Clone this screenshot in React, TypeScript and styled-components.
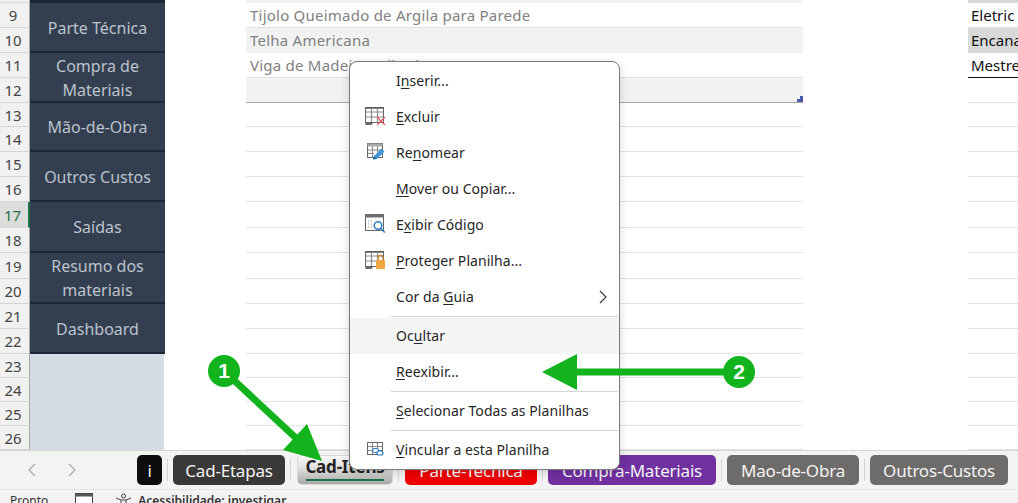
import React from "react";
import styled, { createGlobalStyle } from "styled-components";

const GlobalStyle = createGlobalStyle`
  html, body { margin: 0; padding: 0; background: #fff; }
  body { width: 1018px; height: 503px; overflow: hidden; font-family: "Noto Sans", "Open Sans", sans-serif; }
`;

const Page = styled.div`
  position: relative;
  width: 1018px;
  height: 503px;
  overflow: hidden;
  display: flex;
  flex-direction: column;
`;

const Sheet = styled.div`
  display: grid;
  height: 450px;
  flex: none;
  grid-template-columns: 30px 134px 82px 557px 165px 50px;
  grid-template-rows: 3px 25px 25px 25px 25px 24px 25px 25px 25px 26px 25px 26px 25px 25px 25px 24px 24px 24px 24px;
`;

const RowHead = styled.div<{ $row: number; $active?: boolean }>`
  grid-column: 1;
  grid-row: ${(p) => p.$row};
  box-sizing: border-box;
  display: flex;
  align-items: center;
  justify-content: center;
  padding-right: 3px;
  font-size: 15px;
  color: ${(p) => (p.$active ? "#1e7145" : "#444")};
  background: ${(p) => (p.$active ? "#dcdcdc" : "#f1f1f1")};
  border-bottom: 1px solid #d6d6d6;
  border-right: ${(p) => (p.$active ? "2px solid #1e7145" : "1px solid #a6a6a6")};
`;

const NavButton = styled.div<{ $start: number; $span: number }>`
  grid-column: 2;
  grid-row: ${(p) => p.$start} / span ${(p) => p.$span};
  box-sizing: border-box;
  display: flex;
  align-items: center;
  justify-content: center;
  text-align: center;
  width: 135px;
  padding-top: 1px;
  background: #333f50;
  border-bottom: 2px solid #1c2735;
  color: #bcc3cb;
  font-size: 16px;
  line-height: 24px;
`;

const NavFill = styled.div`
  grid-column: 2;
  grid-row: 16 / span 4;
  background: #d6dce5;
`;

const TopNavEdge = styled.div`
  grid-column: 2;
  grid-row: 1;
  width: 135px;
  background: #1c2735;
`;

const ItemCell = styled.div<{ $row: number; $shade?: boolean; $strong?: boolean }>`
  grid-column: 4;
  grid-row: ${(p) => p.$row};
  box-sizing: border-box;
  position: relative;
  padding-left: 4px;
  display: flex;
  align-items: center;
  font-size: 15px;
  letter-spacing: 0.23px;
  color: #7f7f7f;
  white-space: nowrap;
  background: ${(p) => (p.$shade ? "#f2f2f2" : "#fff")};
  border-bottom: 1px solid ${(p) => (p.$strong ? "#a6a6a6" : p.$shade ? "#f2f2f2" : "#e2e2e2")};
`;

const Handle = styled.span`
  position: absolute;
  right: 0;
  bottom: 0;
  width: 6px;
  height: 6px;
  background: #4a5aa8;
  clip-path: polygon(100% 0, 100% 100%, 0 100%, 0 50%, 50% 50%, 50% 0);
`;

const RoleCell = styled.div<{ $row: number; $shade?: boolean; $strong?: boolean }>`
  grid-column: 6;
  grid-row: ${(p) => p.$row};
  box-sizing: border-box;
  padding-left: 3px;
  display: flex;
  align-items: center;
  overflow: hidden;
  font-size: 15px;
  color: #111;
  white-space: nowrap;
  background: ${(p) => (p.$shade ? "#d9d9d9" : "#fff")};
  border-bottom: 1px solid ${(p) => (p.$strong ? "#111" : p.$shade ? "#d9d9d9" : "#e2e2e2")};
`;

const TabBar = styled.div`
  box-sizing: border-box;
  height: 40px;
  flex: none;
  display: flex;
  align-items: center;
  background: #f3f3f3;
  border-top: 1px solid #d4d4d4;
  border-bottom: 1px solid #e4e4e4;
`;

const Arrows = styled.div`
  width: 137px;
  flex: none;
  display: flex;
  gap: 28px;
  padding-left: 26px;
  box-sizing: border-box;
  color: #a8a8a8;
`;

const Tabs = styled.div`
  display: flex;
  align-items: center;
  white-space: nowrap;
`;

const Tab = styled.div<{ $bg: string; $w: number }>`
  box-sizing: border-box;
  height: 30px;
  width: ${(p) => p.$w}px;
  flex: none;
  display: flex;
  align-items: center;
  justify-content: center;
  border-radius: 5px;
  background: ${(p) => p.$bg};
  color: #f4f4f4;
  font-size: 17px;
  letter-spacing: -0.2px;
`;

const ActiveTab = styled.div`
  position: relative;
  box-sizing: border-box;
  height: 30px;
  width: 96px;
  flex: none;
  display: flex;
  justify-content: center;
  border-radius: 5px;
  border: 1px solid #d8d8d8;
  background: linear-gradient(#f8f8f8, #e2e2e2 40%, #a8a8a8);
  color: #222;
  font-size: 17px;
  font-weight: 700;
  line-height: 22px;
  letter-spacing: -0.2px;
`;

const ActiveLine = styled.span`
  position: absolute;
  left: 8px;
  right: 8px;
  bottom: 3px;
  height: 2px;
  background: #1e7145;
`;

const TabSep = styled.span<{ $w?: number }>`
  width: ${(p) => p.$w ?? 11}px;
  height: 22px;
  flex: none;
  position: relative;
  &::after {
    content: "";
    position: absolute;
    left: 5px;
    top: 0;
    bottom: 0;
    width: 1px;
    background: #d2d2d2;
  }
`;

const StatusBar = styled.div`
  flex: 1;
  display: flex;
  align-items: flex-start;
  background: #f3f3f3;
  padding-left: 10px;
  padding-top: 3px;
  font-size: 12px;
  line-height: 16px;
  color: #333;
  white-space: nowrap;
`;

const StatusText = styled.span<{ $bold?: boolean }>`
  font-weight: ${(p) => (p.$bold ? 600 : 400)};
`;

const StatusIcon = styled.svg<{ $ml: number }>`
  margin-left: ${(p) => p.$ml}px;
  margin-right: 6px;
  flex: none;
`;

const Menu = styled.div`
  position: absolute;
  left: 349px;
  top: 61px;
  width: 271px;
  height: 409px;
  box-sizing: border-box;
  padding: 1px 0;
  background: #fff;
  border: 1px solid #7a7a7a;
  border-radius: 8px;
  box-shadow: 0 2px 10px rgba(0, 0, 0, 0.16);
  display: flex;
  flex-direction: column;
`;

const Item = styled.div<{ $hover?: boolean }>`
  box-sizing: border-box;
  height: 36px;
  flex: none;
  display: flex;
  align-items: center;
  position: relative;
  padding: 0 0 2px 46px;
  font-size: 14px;
  letter-spacing: 0.06px;
  color: #262626;
  background: ${(p) => (p.$hover ? "#f5f5f5" : "transparent")};
  u { text-underline-offset: 2px; text-decoration-thickness: 1px; }
`;

const ItemIcon = styled.svg`
  position: absolute;
  left: 14px;
  top: 7px;
`;

const Chevron = styled.svg`
  position: absolute;
  right: 8px;
  top: 10px;
`;

const Separator = styled.div`
  height: 3px;
  flex: none;
  margin-left: 41px;
  margin-right: 1px;
  display: flex;
  align-items: center;
  &::after {
    content: "";
    flex: 1;
    height: 1px;
    background: #d4d4d4;
  }
`;

const Annotation = styled.svg`
  position: absolute;
  left: 0;
  top: 0;
  pointer-events: none;
`;

const Badge = styled.div<{ $x: number; $y: number }>`
  position: absolute;
  left: ${(p) => p.$x - 16}px;
  top: ${(p) => p.$y - 16}px;
  width: 32px;
  height: 32px;
  border-radius: 50%;
  background: #12b31c;
  color: #fff;
  font-family: "Liberation Sans", sans-serif;
  font-weight: 700;
  font-size: 21px;
  display: flex;
  align-items: center;
  justify-content: center;
`;

const rowNumbers = [9, 10, 11, 12, 13, 14, 15, 16, 17, 18, 19, 20, 21, 22, 23, 24, 25, 26];

const navs: { label: React.ReactNode; start: number; span: number }[] = [
  { label: "Parte Técnica", start: 2, span: 2 },
  { label: <>Compra de<br />Materiais</>, start: 4, span: 2 },
  { label: "Mão-de-Obra", start: 6, span: 2 },
  { label: "Outros Custos", start: 8, span: 2 },
  { label: "Saídas", start: 10, span: 2 },
  { label: <>Resumo dos<br />materiais</>, start: 12, span: 2 },
  { label: "Dashboard", start: 14, span: 2 },
];

const items = ["Tijolo Queimado de Argila para Parede", "Telha Americana", "Viga de Madeira Talhada", ""];
const roles = ["Eletric", "Encana", "Mestre"];
const emptyRows = [6, 7, 8, 9, 10, 11, 12, 13, 14, 15, 16, 17, 18, 19];

const SheetGridIcon = () => (
  <>
    <rect x="1.5" y="1.5" width="18" height="15" fill="#fff" stroke="#666" />
    <path d="M1.5 2h18" stroke="#555" strokeWidth="1.4" fill="none" />
    <path d="M7.500 2v14M13.500 2v14M2 6h17M2 11h17" stroke="#8a8a8a" strokeWidth="1.200" fill="none" />
    <path d="M1.500 16.500h8l-2 2.500h-6z" fill="#6a6a6a" />
  </>
);

const ExcluirIcon = () => (
  <ItemIcon width="22" height="22" viewBox="0 0 22 22">
    <SheetGridIcon />
    <path d="M13 11l8 8M21 11l-8 8" stroke="#e0565a" strokeWidth="1.100" fill="none" />
  </ItemIcon>
);

const RenomearIcon = () => (
  <ItemIcon width="22" height="22" viewBox="0 0 22 22">
    <rect x="3.500" y="1.500" width="15" height="14" fill="#fff" stroke="#666" />
    <rect x="3.500" y="1.500" width="15" height="3" fill="#a8a8a8" />
    <path d="M8.500 4.500v11M13.500 4.500v6M4 8h14M4 11.500h6" stroke="#888" fill="none" />
    <path d="M9 17.500l1-3.500 7.500-7.500 3 3-7.500 7.500z" fill="#3f95d6" />
    <path d="M9 17.500l1-3.500 2.500 2.500z" fill="#20659b" />
  </ItemIcon>
);

const CodeIcon = () => (
  <ItemIcon width="22" height="22" viewBox="0 0 22 22">
    <rect x="1.500" y="0.500" width="18" height="16" fill="#fff" stroke="#666" />
    <rect x="1.500" y="0.500" width="18" height="3" fill="#707070" />
    <path d="M4 7h1M4 10h1M4 13h1M7 7h1M7 10h1M7 13h1" stroke="#999" fill="none" />
    <circle cx="14" cy="11.500" r="3.800" fill="#fff" stroke="#2d7fc1" strokeWidth="1.500" />
    <path d="M16.800 14.300l4 4.200" stroke="#2d7fc1" strokeWidth="1.600" fill="none" />
  </ItemIcon>
);

const ProtectIcon = () => (
  <ItemIcon width="22" height="22" viewBox="0 0 22 22">
    <SheetGridIcon />
    <rect x="12" y="10" width="9" height="9" rx="1" fill="#f0a63c" />
    <path d="M14 10V8a2.500 2.500 0 0 1 5 0v2" stroke="#c9862b" strokeWidth="1.300" fill="none" />
  </ItemIcon>
);

const LinkIcon = () => (
  <ItemIcon width="22" height="22" viewBox="0 0 22 22">
    <rect x="3.500" y="3.500" width="15" height="12" fill="#fff" stroke="#666" />
    <path d="M8.500 4v11M13.500 4v11M4 7.500h14M4 11.500h14" stroke="#888" fill="none" />
    <rect x="8.500" y="9.500" width="6" height="4" rx="2" fill="#fff" stroke="#2d7fc1" strokeWidth="1.200" />
    <rect x="13" y="12" width="6" height="4" rx="2" fill="#fff" stroke="#2d7fc1" strokeWidth="1.200" />
  </ItemIcon>
);

export default function App() {
  return (
    <Page>
      <GlobalStyle />
      <Sheet>
        <RowHead $row={1} />
        {rowNumbers.map((n, i) => (
          <RowHead key={n} $row={i + 2} $active={n === 17}>
            {n}
          </RowHead>
        ))}
        <TopNavEdge />
        {navs.map((n, i) => (
          <NavButton key={i} $start={n.start} $span={n.span}>
            <span>{n.label}</span>
          </NavButton>
        ))}
        <NavFill />
        <ItemCell $row={1} $shade />
        {items.map((t, i) => (
          <ItemCell key={i} $row={i + 2} $shade={i % 2 === 1} $strong={i === 3}>
            {t}
            {i === 3 && <Handle />}
          </ItemCell>
        ))}
        {emptyRows.map((r) => (
          <ItemCell key={r} $row={r} />
        ))}
        <RoleCell $row={1} $shade />
        {roles.map((t, i) => (
          <RoleCell key={t} $row={i + 2} $shade={i === 1} $strong={i === 2}>
            {t}
          </RoleCell>
        ))}
        {[5, ...emptyRows].map((r) => (
          <RoleCell key={r} $row={r} />
        ))}
      </Sheet>

      <TabBar>
        <Arrows>
          <svg width="12" height="14" viewBox="0 0 12 14">
            <path d="M9 1L3 7l6 6" fill="none" stroke="currentColor" strokeWidth="1.200" />
          </svg>
          <svg width="12" height="14" viewBox="0 0 12 14">
            <path d="M3 1l6 6-6 6" fill="none" stroke="currentColor" strokeWidth="1.200" />
          </svg>
        </Arrows>
        <Tabs>
          <Tab $bg="#0d0d0d" $w={25}>i</Tab>
          <TabSep />
          <Tab $bg="#3b3838" $w={112}>Cad-Etapas</Tab>
          <TabSep $w={12} />
          <ActiveTab>
            Cad-Itens
            <ActiveLine />
          </ActiveTab>
          <TabSep $w={12} />
          <Tab $bg="#ee0000" $w={132}>Parte-Técnica</Tab>
          <TabSep />
          <Tab $bg="#7030a0" $w={168}>Compra-Materiais</Tab>
          <TabSep />
          <Tab $bg="#6e6b6b" $w={132}>Mao-de-Obra</Tab>
          <TabSep />
          <Tab $bg="#6e6b6b" $w={138}>Outros-Custos</Tab>
        </Tabs>
      </TabBar>

      <StatusBar>
        <StatusText>Pronto</StatusText>
        <StatusIcon $ml={27} width="18" height="14" viewBox="0 0 18 14">
          <rect x="0.500" y="0.500" width="17" height="13" fill="#fff" stroke="#444" />
          <rect x="0.500" y="0.500" width="17" height="3" fill="#555" />
        </StatusIcon>
        <StatusIcon $ml={16} width="17" height="14" viewBox="0 0 17 14">
          <circle cx="8.500" cy="3" r="2" fill="none" stroke="#444" />
          <path d="M1 5l5 2h5l5-2M6 7v7M11 7v7" fill="none" stroke="#444" />
        </StatusIcon>
        <StatusText $bold>Acessibilidade: investigar</StatusText>
      </StatusBar>

      <Annotation width="1018" height="503" viewBox="0 0 1018 503">
        <path d="M224 371L297 439" stroke="#12b31c" strokeWidth="7" fill="none" />
        <path d="M322 461L283 450L307 424Z" fill="#12b31c" />
      </Annotation>
      <Badge $x={224} $y={371}>1</Badge>

      <Menu>
        <Item><span>I<u>n</u>serir...</span></Item>
        <Item><ExcluirIcon /><span><u>E</u>xcluir</span></Item>
        <Item><RenomearIcon /><span>Re<u>n</u>omear</span></Item>
        <Item><span><u>M</u>over ou Copiar...</span></Item>
        <Item><CodeIcon /><span>E<u>x</u>ibir Código</span></Item>
        <Item><ProtectIcon /><span><u>P</u>roteger Planilha...</span></Item>
        <Item>
          <span>Cor da <u>G</u>uia</span>
          <Chevron width="16" height="16" viewBox="0 0 16 16">
            <path d="M5 2l6 6-6 6" fill="none" stroke="#333" strokeWidth="1.100" />
          </Chevron>
        </Item>
        <Separator />
        <Item $hover><span>Oc<u>u</u>ltar</span></Item>
        <Item><span><u>R</u>eexibir...</span></Item>
        <Separator />
        <Item><span><u>S</u>elecionar Todas as Planilhas</span></Item>
        <Separator />
        <Item><LinkIcon /><span><u>V</u>incular a esta Planilha</span></Item>
      </Menu>

      <Annotation width="1018" height="503" viewBox="0 0 1018 503">
        <path d="M739 372H570" stroke="#12b31c" strokeWidth="7" fill="none" />
        <path d="M542 372L577 354V390Z" fill="#12b31c" />
      </Annotation>
      <Badge $x={739} $y={372}>2</Badge>
    </Page>
  );
}
